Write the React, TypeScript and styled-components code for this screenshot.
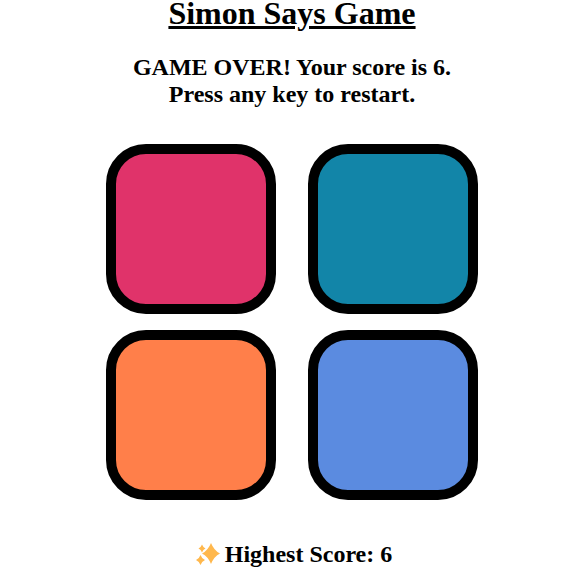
import React from "react";
import styled, { createGlobalStyle } from "styled-components";

const Global = createGlobalStyle`
  html, body { margin: 0; padding: 0; background: #fff; }
  body { font-family: "Liberation Serif", "Times New Roman", serif; color: #000; }
`;

const Page = styled.main`
  width: 584px;
  text-align: center;
`;

const Title = styled.h1`
  margin: 0;
  font-size: 32px;
  line-height: 27px;
  font-weight: 700;
  text-decoration: underline;
`;

const Status = styled.h2`
  margin: 27px 0 0;
  font-size: 24px;
  line-height: 27px;
  font-weight: 700;
`;

const Board = styled.div`
  display: grid;
  grid-template-columns: 170px 170px;
  justify-content: center;
  column-gap: 32px;
  row-gap: 16px;
  margin-top: 36px;
`;

const Pad = styled.div<{ $color: string }>`
  box-sizing: border-box;
  width: 170px;
  height: 170px;
  border: 10px solid #000;
  border-radius: 40px;
  background: ${(p) => p.$color};
`;

const Score = styled.h2`
  display: flex;
  justify-content: center;
  align-items: center;
  gap: 5px;
  margin: 41px 0 0;
  font-size: 24px;
  line-height: 27px;
  font-weight: 700;
`;

const SparkleIcon = styled.svg`
  display: block;
  width: 24px;
  height: 24px;
  margin-left: 4px;
`;

const Sparkle = () => (
  <SparkleIcon viewBox="0 0 24 24" aria-hidden="true">
    <path fill="#FFB84D" d="M15 0Q18 7.500 24 10.500Q18 13.500 15 21Q12 13.500 6 10.500Q12 7.500 15 0z" />
    <path fill="#FFB84D" d="M6 1.500Q7 4.300 9.500 5.500Q7 6.700 6 9.500Q5 6.700 2.500 5.500Q5 4.300 6 1.500z" />
    <path fill="#FFB84D" d="M4.500 12Q5.700 15.600 9 17Q5.700 18.400 4.500 22Q3.300 18.400 0 17Q3.300 15.600 4.500 12z" />
  </SparkleIcon>
);

const colors = ["#E0336A", "#1285A8", "#FF7F4A", "#5B8BE0"];

export default function App() {
  return (
    <Page>
      <Global />
      <Title>Simon Says Game</Title>
      <Status>
        GAME OVER! Your score is 6.
        <br />
        Press any key to restart.
      </Status>
      <Board>
        {colors.map((c) => (
          <Pad key={c} $color={c} />
        ))}
      </Board>
      <Score>
        <Sparkle />
        <span>Highest Score: 6</span>
      </Score>
    </Page>
  );
}
